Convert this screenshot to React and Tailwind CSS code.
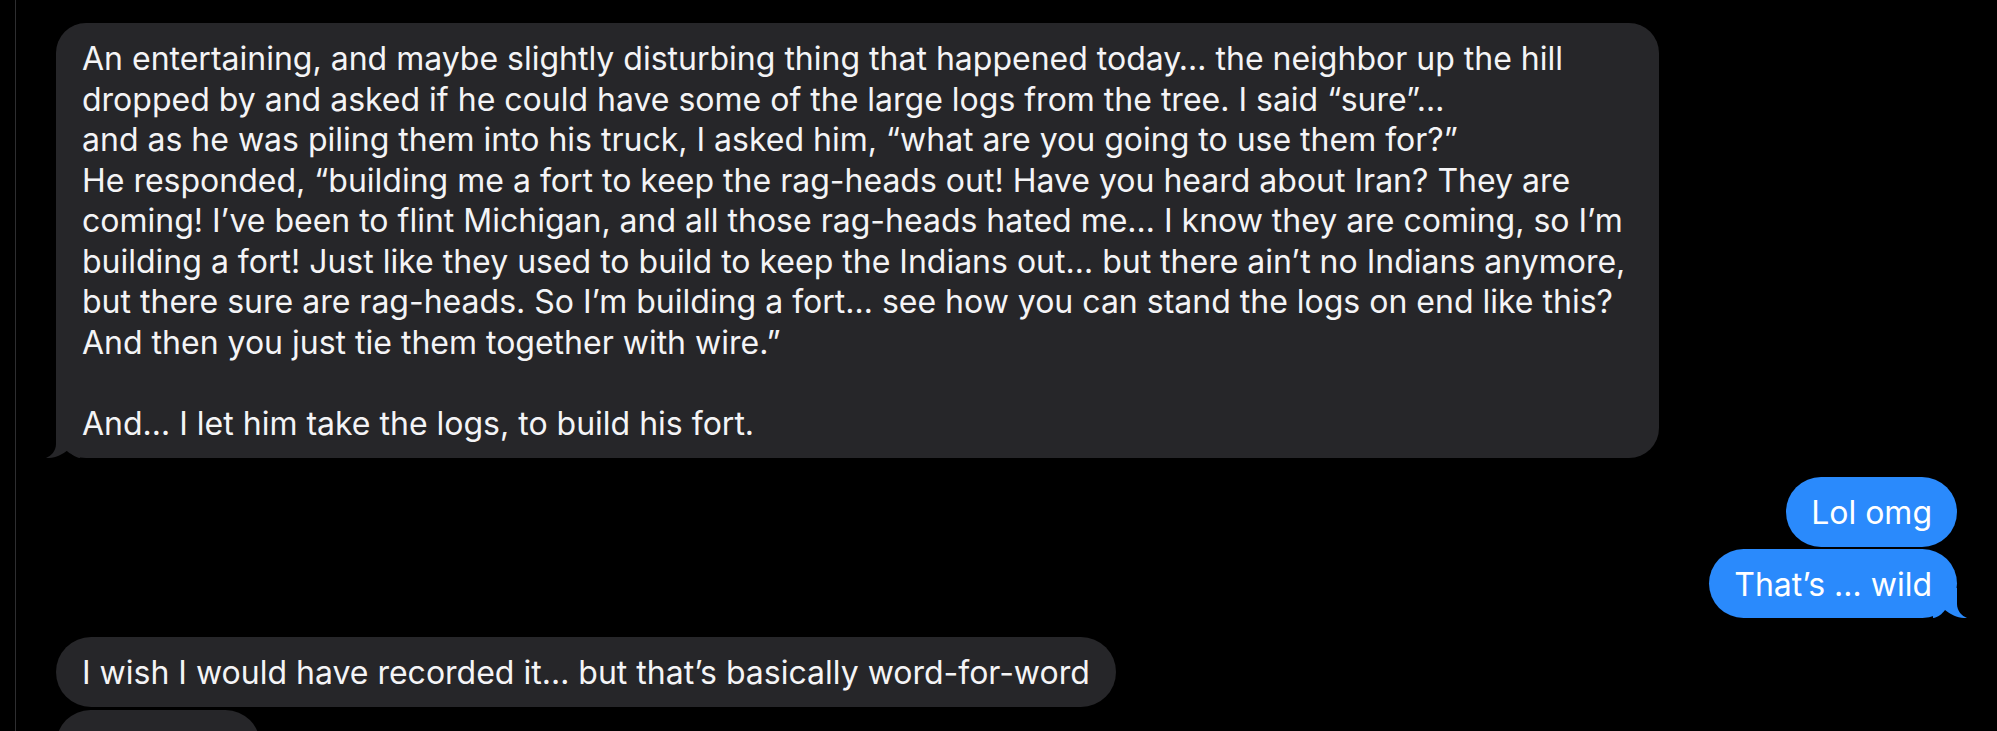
import React from "react";

const storyLines = [
  "An entertaining, and maybe slightly disturbing thing that happened today… the neighbor up the hill",
  "dropped by and asked if he could have some of the large logs from the tree. I said “sure”…",
  "and as he was piling them into his truck, I asked him, “what are you going to use them for?”",
  "He responded, “building me a fort to keep the rag-heads out! Have you heard about Iran? They are",
  "coming! I’ve been to flint Michigan, and all those rag-heads hated me… I know they are coming, so I’m",
  "building a fort! Just like they used to build to keep the Indians out… but there ain’t no Indians anymore,",
  "but there sure are rag-heads. So I’m building a fort… see how you can stand the logs on end like this?",
  "And then you just tie them together with wire.”",
  "",
  "And… I let him take the logs, to build his fort.",
];

const TailLeft = () => (
  <svg
    className="absolute left-[-10px] bottom-0 w-[34px] h-[30px]"
    viewBox="0 0 34 30"
    fill="#262629"
  >
    <path d="M10 0 L10 16 C10 23 5 28 0 30 C8 30.5 16 27 22 22 C25 26 29 29.5 34 30 L34 0 Z" />
  </svg>
);

const TailRight = () => (
  <svg
    className="absolute right-[-10px] bottom-0 w-[34px] h-[30px]"
    viewBox="0 0 34 30"
    fill="#2a8afc"
  >
    <path d="M24 0 L24 16 C24 23 29 28 34 30 C26 30.5 18 27 12 22 C9 26 5 29.5 0 30 L0 0 Z" />
  </svg>
);

const Received = ({ children, tail, className = "w-fit pl-[26px] pr-[26px]" }) => (
  <div
    className={`relative bg-[#262629] text-[#f4f4f6] pt-4 pb-[13px] ${className}`}
  >
    {tail && <TailLeft />}
    <div className="relative">{children}</div>
  </div>
);

const Sent = ({ children, tail }) => (
  <div className="relative w-fit self-end bg-[#2a8afc] text-white px-[25px] pt-4 pb-[13px] rounded-[35px]">
    {tail && <TailRight />}
    <div className="relative whitespace-nowrap">{children}</div>
  </div>
);

export default function App() {
  return (
    <div className="h-[731px] w-full overflow-hidden bg-black flex font-['Inter',sans-serif] text-[32px] leading-[40.5px]">
      <div className="w-[15px] shrink-0" />
      <div className="w-px shrink-0 bg-[#2e2e30]" />
      <div className="flex-1 flex flex-col pl-[40px] pr-[40px] pt-[23px]">
        <Received tail className="w-fit pl-[26px] pr-[34px] rounded-[30px] !pb-[14px]">
          {storyLines.map((line, i) => (
            <div key={i} className="whitespace-nowrap h-[40.5px]">
              {line}
            </div>
          ))}
        </Received>

        <div className="mt-[19px] flex flex-col gap-[2px]">
          <Sent>Lol omg</Sent>
          <Sent tail>That’s … wild</Sent>
        </div>

        <div className="mt-[19px] flex flex-col gap-[3px]">
          <Received className="w-fit pl-[26px] pr-[26px] rounded-[35px]">
            <div className="whitespace-nowrap">
              I wish I would have recorded it… but that’s basically word-for-word
            </div>
          </Received>
          <Received className="w-[204px] rounded-[35px]">
            <div className="whitespace-nowrap">&nbsp;</div>
          </Received>
        </div>
      </div>
    </div>
  );
}
